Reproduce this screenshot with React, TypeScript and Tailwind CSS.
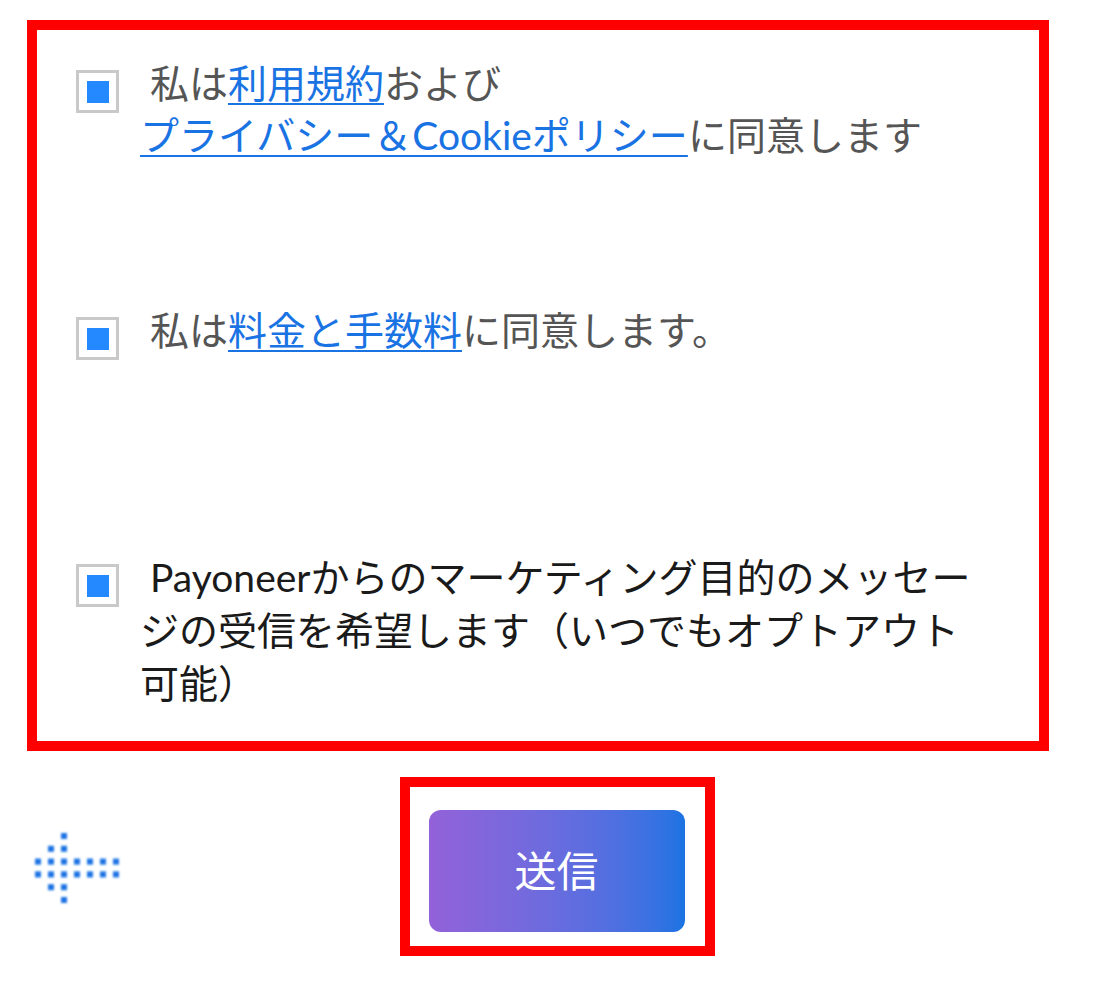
const fontStack = "font-['Lato','Noto_Sans_CJK_JP',sans-serif]"

function Box() {
  return (
    <span className="mt-[13px] flex h-[43px] w-[43px] shrink-0 items-center justify-center border-[3px] border-[#c9c9c9] bg-white">
      <span className="block h-[22px] w-[22px] bg-[#2489ff]" />
    </span>
  )
}

function Link({ children }: { children: React.ReactNode }) {
  return (
    <a href="#" className="text-[#1a73e3] underline decoration-[2px] underline-offset-[5px]">
      {children}
    </a>
  )
}

const dots: [number, number][] = [
  [2, 0],
  [1, 1], [2, 1],
  [0, 2], [1, 2], [2, 2], [3, 2], [4, 2], [5, 2], [6, 2],
  [0, 3], [1, 3], [2, 3], [3, 3], [4, 3], [5, 3], [6, 3],
  [1, 4], [2, 4],
  [2, 5],
]

function DotArrow() {
  return (
    <svg width="92" height="78" viewBox="0 0 92 78">
      <defs>
        <filter id="soft" x="-20%" y="-20%" width="140%" height="140%">
          <feGaussianBlur stdDeviation="1" />
        </filter>
      </defs>
      <g filter="url(#soft)" fill="#1a73e3">
        {dots.map(([c, r]) => (
          <rect key={`${c}-${r}`} x={3 + c * 13} y={3 + r * 12.8} width="6" height="6" />
        ))}
      </g>
    </svg>
  )
}

export default function App() {
  return (
    <div className={`min-h-[986px] w-[1114px] bg-white pt-[20px] ${fontStack}`}>
      <div className="ml-[27px] h-[731px] w-[1022px] border-[10px] border-[#ff0000] pl-[39px] pt-[27px]">
        <label className="flex gap-[21px] text-[39px] leading-[52px] text-[#555555]">
          <Box />
          <span className="whitespace-nowrap">
            &nbsp;私は<Link>利用規約</Link>および
            <br />
            <Link>プライバシー＆Cookieポリシー</Link>に同意します
          </span>
        </label>

        <label className="mt-[143px] flex gap-[21px] text-[39px] leading-[52px] text-[#555555]">
          <Box />
          <span className="whitespace-nowrap">
            &nbsp;私は<Link>料金と手数料</Link>に同意します。
          </span>
        </label>

        <label className="mt-[191px] flex gap-[21px] text-[39px] leading-[53px] text-[#1a1a1a]">
          <Box />
          <span className="whitespace-nowrap">
            &nbsp;Payoneerからのマーケティング目的のメッセー
            <br />
            ジの受信を希望します（いつでもオプトアウト
            <br />
            可能）
          </span>
        </label>
      </div>

      <div className="mt-[26px] grid grid-cols-[1fr_auto_1fr] items-center">
        <div className="pl-[32px] pt-[4px]">
          <DotArrow />
        </div>
        <div className="h-[179px] w-[315px] border-[10px] border-[#ff0000] pl-[19px] pt-[23px]">
          <button
            type="button"
            className="flex h-[122px] w-[256px] items-center justify-center rounded-[12px] bg-linear-to-r from-[#9361d9] to-[#1a73e3] text-[42px] text-white"
          >
            送信
          </button>
        </div>
        <div />
      </div>
    </div>
  )
}
